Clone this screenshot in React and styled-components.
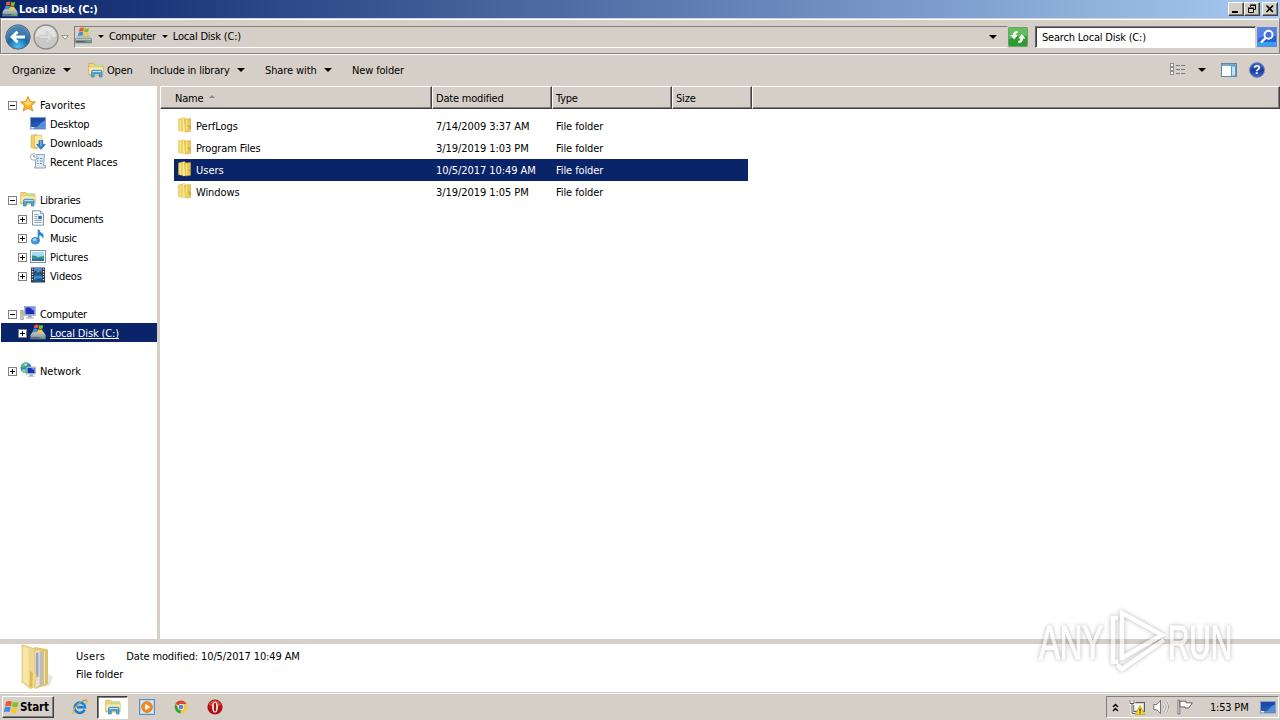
import React from "react";
import styled, { createGlobalStyle, css } from "styled-components";

const Global = createGlobalStyle`
  * { box-sizing: border-box; }
  html, body { margin: 0; padding: 0; overflow: hidden; }
  body {
    font-family: "DejaVu Sans Condensed", "DejaVu Sans", "Liberation Sans", sans-serif;
    font-stretch: condensed;
    font-size: 11px;
    letter-spacing: -0.2px;
    color: #000;
    background: #d4d0c8;
    white-space: nowrap;
    cursor: default;
  }
`;

const FACE = "#d5cfc7";
const NAVY = "#0a246a";

const Screen = styled.div`
  position: relative;
  width: 1280px;
  height: 720px;
  display: flex;
  flex-direction: column;
  background: ${FACE};
`;

const Icon = styled.svg`
  display: block;
  flex: none;
  width: ${(p) => p.$w || 16}px;
  height: ${(p) => p.$h || p.$w || 16}px;
`;

/* ---------- icons ---------- */
const Flag = () => (
  <g>
    <path d="M3.2 1.4Q5.2.2 7.3 1.2L6.6 4.6Q4.6 3.8 2.5 4.8z" fill="#f0582a" />
    <path d="M8 1.4Q10 2.3 12 1.4L11.2 4.8Q9.3 5.6 7.3 4.8z" fill="#7fc225" />
    <path d="M2.3 5.4Q4.4 4.4 6.4 5.3L5.7 8.6Q3.6 7.8 1.6 8.8z" fill="#3a8ee6" />
    <path d="M7.1 5.5Q9.1 6.4 11.1 5.5L10.4 8.8Q8.4 9.7 6.4 8.8z" fill="#fbc91f" />
  </g>
);

const DriveIcon = ({ size = 16 }) => (
  <Icon viewBox="0 0 16 16" $w={size}>
    <path d="M.3 11.300L3.500 6.500h9l3.300 4.800z" fill="#b9c0b8" />
    <path d="M.3 10.800h15.500V15.300H.3z" fill="#6f8088" />
    <path d="M1 11.300h14v1.200H1z" fill="#b7c5c4" />
    <path d="M11.500 13h2.800v1.200h-2.800z" fill="#45d04c" />
    <path d="M1.200 13.400h8v.8h-8z" fill="#44586a" />
    <g transform="translate(1.200 -.3)"><Flag /></g>
  </Icon>
);

const ComputerIcon = () => (
  <Icon viewBox="0 0 16 16">
    <path d="M.8 5.500h2.400v9H.8z" fill="#d9dcd2" stroke="#7e8474" strokeWidth=".7" />
    <path d="M1.500 7h1M1.500 9h1" stroke="#6ba637" />
    <rect x="4.400" y="1.300" width="11" height="9" fill="#cdd4e4" stroke="#8790a8" strokeWidth=".6" />
    <path d="M5.400 2.300h9v7h-9z" fill="#1c2fb8" />
    <path d="M9.500 2.300h4.900v4z" fill="#7d9af0" />
    <path d="M8.400 10.400h3l.8 2.400H7.400z" fill="#9aa2b4" />
    <path d="M6 12.400h8v1.200H6z" fill="#b6bccb" />
  </Icon>
);

const NetworkIcon = () => (
  <Icon viewBox="0 0 16 16">
    <circle cx="6" cy="5.800" r="5.500" fill="#2c8ad6" />
    <path d="M2 2.500Q5-.2 7.500 1L6.500 4 3.600 5.600 1 5z" fill="#67c34a" />
    <path d="M3 7l3 .8L5.400 11Q3 10.500 1.800 8.500z" fill="#8fdb6c" />
    <path d="M4 2.200L7 1.500 6 4z" fill="#d8f5ff" />
    <rect x="6.600" y="5" width="9" height="7" fill="#d3d9e6" stroke="#8892aa" strokeWidth=".6" />
    <rect x="7.500" y="5.900" width="7.200" height="5.200" fill="#1736b6" />
    <path d="M11 5.900h3.700v3z" fill="#6d93ee" />
    <path d="M10 12.200h2.500l.8 2.200H9z" fill="#a4acbc" />
    <path d="M8 14h6.500v1H8z" fill="#c2c9d6" />
  </Icon>
);

const StarIcon = () => (
  <Icon viewBox="0 0 16 16">
    <path d="M8 .6l2.200 5 5.300.4-4.100 3.500 1.400 5.500L8 12l-4.800 3 1.400-5.500L.5 6l5.300-.4z" fill="#fdb62c" stroke="#e58a14" strokeWidth=".9" />
    <path d="M8 2.800l1.400 3.500 3 .3L8 9.500 3.600 6.600l3-.3z" fill="#ffe27a" />
  </Icon>
);

const MonitorIcon = () => (
  <Icon viewBox="0 0 16 16">
    <rect x=".5" y="2.500" width="15" height="11.500" fill="#2457b4" stroke="#7ea0cf" />
    <path d="M1 3h14v4Q8 6 1 9z" fill="#1c4aa6" />
    <path d="M9 10Q12 6 15 5.500V12H7z" fill="#4f8fe0" />
    <path d="M1 12h14v1.500H1z" fill="#6f8fc0" />
    <path d="M1 12h3v1.500H1z" fill="#dff0ff" />
  </Icon>
);

const DownloadsIcon = () => (
  <Icon viewBox="0 0 16 16">
    <path d="M1 1.500L7 .5V15l-6-1.500z" fill="#f0cf68" stroke="#d4aa3c" strokeWidth=".6" />
    <path d="M4.500 1.500h7.500v12H4.500z" fill="#fbeaa4" stroke="#d9b552" strokeWidth=".6" />
    <path d="M9 6.500h3.800v4h2.400L11 15.400 6.700 10.500H9z" fill="#2d86d6" stroke="#1c62ad" strokeWidth=".7" />
    <path d="M9.700 7h1.200v5" stroke="#86c6f6" fill="none" />
  </Icon>
);

const RecentIcon = () => (
  <Icon viewBox="0 0 16 16">
    <path d="M5.500 1.500h9l-1 11h2V15H4.500l1-2z" fill="#e1e9f1" stroke="#8599ad" strokeWidth=".9" />
    <path d="M7 5.500h1.600M10 5.500h2.500M7 8h1.600M10 8h2.500M7 10.500h1.600M10 10.500h2" stroke="#5d8fc6" strokeWidth="1.200" />
    <circle cx="3.800" cy="3.900" r="3.300" fill="#fff" stroke="#9aa4ae" strokeWidth=".9" />
    <path d="M3.800 2v2h1.600" stroke="#54606c" fill="none" strokeWidth=".8" />
  </Icon>
);

const LibraryIcon = ({ size = 16 }) => (
  <Icon viewBox="0 0 16 16" $w={size}>
    <path d="M.8 1.500h5l1 1.500h8v10H.8z" fill="#f3d775" stroke="#cda645" strokeWidth=".7" />
    <path d="M7 2.200h7.500v2.500H7z" fill="#bfe0a0" />
    <path d="M.8 5h14.400v7H.8z" fill="#fbeeb0" stroke="#d7b757" strokeWidth=".6" />
    <path d="M3.500 15V9.600Q3.500 8.200 5 8.200h7.500Q14 8.200 14 9.600V15h-2.600v-3.600H6.200V15z" fill="#4fa6e4" stroke="#2d7cc0" strokeWidth=".7" />
    <path d="M4.500 9.500h8.500" stroke="#b8e2fb" />
  </Icon>
);

const DocumentIcon = () => (
  <Icon viewBox="0 0 16 16">
    <path d="M2.500.8h8l3 3v11.400h-11z" fill="#fcfdff" stroke="#71879f" strokeWidth=".9" />
    <path d="M10.500.8v3h3" fill="#d0dceb" stroke="#71879f" strokeWidth=".7" />
    <path d="M4.300 4.500h4M4.300 6.500h3M4.300 8.500h3M4.300 10.500h7.400M4.300 12.500h7.400" stroke="#8195aa" strokeWidth=".9" />
    <path d="M8.200 5.800h3.600v3.400H8.200z" fill="#2f6fb5" />
  </Icon>
);

const MusicIcon = () => (
  <Icon viewBox="0 0 16 16">
    <ellipse cx="5.400" cy="11.800" rx="4" ry="3.300" fill="#3f9fe0" stroke="#1d6db3" strokeWidth=".7" />
    <path d="M7.700 12V.5h1.600Q9.800 3.500 12.800 4.800 14.500 7 12.800 10 12.600 6.800 9.400 6.200V12z" fill="#2b88cf" />
    <ellipse cx="4.600" cy="10.800" rx="2" ry="1.200" fill="#a6dcfa" />
  </Icon>
);

const PicturesIcon = () => (
  <Icon viewBox="0 0 16 16">
    <rect x=".5" y="2.500" width="15" height="12" fill="#fff" stroke="#7890a8" />
    <path d="M2 4h12v6H2z" fill="#a6d9f5" />
    <path d="M2 7.500Q5 7 8 9l6-1v5H2z" fill="#3e8f86" />
    <path d="M2 11h12v2H2z" fill="#2d6ca0" />
  </Icon>
);

const VideosIcon = () => (
  <Icon viewBox="0 0 16 16">
    <path d="M1 .5h14v15H1z" fill="#2a2f38" />
    <path d="M4 1h8v6.600H4zM4 8.600h8V15H4z" fill="#3c8fd4" />
    <path d="M4 5q3-3 8 0v2.600H4zM4 13q4-3 8-1v3H4z" fill="#1e5590" />
    <path d="M8 3l2 1.500-3 1z" fill="#e87848" />
    <path d="M2.500 1.500v13M13.500 1.500v13" stroke="#e4e8ee" strokeWidth="1.400" strokeDasharray="1.300 1.300" />
  </Icon>
);

const FolderIcon = () => (
  <Icon viewBox="0 0 16 16">
    <path d="M1.500 2L7.500 .6v14.200l-6-1.200z" fill="#f0d264" stroke="#dcb950" strokeWidth=".5" />
    <path d="M6 1L9.500 1.700v12.600L6 15.300z" fill="#fbeb9c" />
    <path d="M7.500 2.200l6-.6v12.600l-5 .8z" fill="#ecc955" stroke="#cfa83a" strokeWidth=".6" />
    <path d="M3.200 2.800v10.700" stroke="#f9e48e" strokeWidth="1.300" />
    <path d="M9.500 2.500v11.500" stroke="#f8e38c" strokeWidth="1.200" />
    <path d="M11 9h2v3" stroke="#b8932c" fill="none" strokeWidth=".8" />
  </Icon>
);

const BigFolderIcon = () => (
  <Icon viewBox="0 0 36 48" $w={36} $h={48}>
    <path d="M26 28l8 5-3 8-6 2z" fill="#e8e6df" />
    <path d="M15 3l13 2v36l-12 4z" fill="#e3c66c" />
    <path d="M15.500 7l5-1v35l-5 3z" fill="#e6e4dc" />
    <path d="M17 9l2.500-.5v24l-2.500 1z" fill="#8fa7d8" />
    <path d="M21 8l3-.5v33l-3 1.500z" fill="#b9bec6" />
    <path d="M24 6l5-.5V40l-5 2z" fill="#dcc06a" />
    <path d="M25.500 7v33.500" stroke="#f4e4a8" strokeWidth="1.200" />
    <path d="M3 .8L16 5v24l1.500 2-2 12-4 1.500L3 38z" fill="#efd98e" stroke="#d9bf68" strokeWidth=".8" />
    <path d="M4 2.500l5.500 2v36L4 37z" fill="#f8e7a6" />
    <path d="M11 27l3 2-1 14.500-2.500-.5z" fill="#dcb85a" />
  </Icon>
);

const BackIcon = () => (
  <Icon viewBox="0 0 26 26" $w={26}>
    <defs>
      <radialGradient id="back" cx=".5" cy=".9" r=".85">
        <stop offset="0" stopColor="#4cc4f0" />
        <stop offset=".5" stopColor="#1b67a6" />
        <stop offset="1" stopColor="#6fa0c8" />
      </radialGradient>
    </defs>
    <circle cx="13" cy="13" r="12.200" fill="url(#back)" stroke="#4d6880" />
    <path d="M2.500 12.500a10.500 10.500 0 0 1 21 0Q13 15 2.500 12.500z" fill="#3f78a8" opacity=".6" />
    <path d="M20 13H8M12.500 7.800L7.200 13l5.300 5.200" fill="none" stroke="#fff" strokeWidth="3" />
  </Icon>
);

const ForwardIcon = () => (
  <Icon viewBox="0 0 26 26" $w={26}>
    <circle cx="13" cy="13" r="12" fill="#c9c8c6" stroke="#8c8c8c" strokeWidth="1.300" />
    <path d="M2.500 12.500a10.500 10.500 0 0 1 21 0Q13 16 2.500 12.500z" fill="#e2e1df" />
    <path d="M6.500 13h12M13.500 8l5 5-5 5" fill="none" stroke="#dcdbd9" strokeWidth="2.600" />
    <path d="M6 11.500h9l-3-3 1.500-1.500 6 6-6 6-1.500-1.500 3-3H6z" fill="none" stroke="#bdbcba" strokeWidth=".6" />
  </Icon>
);

const RefreshIcon = () => (
  <Icon viewBox="0 0 20 20" $w={20}>
    <rect x=".5" y=".5" width="19" height="19" rx="1" fill="#2f9b33" stroke="#6f9e70" />
    <path d="M1 1h18v8Q9 8 1 12z" fill="#62bf5e" />
    <path d="M9.500 4Q5.500 4 4.800 8H2.500l3.700 4.500L9.700 8H7.500Q8 6 10 5.700z" fill="#fff" />
    <path d="M10.500 16q4 0 4.700-4.500h2.300L13.800 7l-3.500 4.500h2.200Q12 14 10 14.300z" fill="#fff" />
  </Icon>
);

const SearchIcon = () => (
  <Icon viewBox="0 0 20 20" $w={20}>
    <rect x=".5" y=".5" width="19" height="19" fill="#2a5ed8" stroke="#5f86d8" />
    <path d="M1 1h18v8Q9 8 1 12z" fill="#5580e6" />
    <path d="M1 15h18v4H1z" fill="#36a0ee" />
    <circle cx="11.500" cy="7.800" r="4" fill="#3f6fe0" stroke="#fff" strokeWidth="1.900" />
    <path d="M8.500 11L4 15.500" stroke="#fff" strokeWidth="2.400" />
  </Icon>
);

const ViewIcon = () => (
  <Icon viewBox="0 0 16 14" $w={16} $h={14}>
    {[0.5, 4.5, 8.5].map((y) => (
      <g key={y} fill="none">
        <rect x=".5" y={y} width="3" height="3" fill="#fff" stroke="#8a8f94" />
        <path d={`M6 ${y + 2}h4M11 ${y + 2}h4`} stroke="#707c8c" />
      </g>
    ))}
  </Icon>
);

const PaneIcon = () => (
  <Icon viewBox="0 0 16 14" $w={16} $h={14}>
    <rect x=".5" y=".5" width="15" height="13" fill="#fff" stroke="#5c88aa" />
    <path d="M1 1h14v2H1z" fill="#7aa8c8" />
    <path d="M10.500 3h4v10h-4z" fill="#bfe4f6" stroke="#5c98bc" />
  </Icon>
);

const HelpGlyph = styled.span`
  width: 16px;
  height: 16px;
  border-radius: 50%;
  border: 1px solid #6d87bb;
  background: linear-gradient(#4468cc, #1d3a9c 55%, #3e6ada);
  color: #fff;
  font: bold 12px/14px "Liberation Sans", sans-serif;
  letter-spacing: 0;
  text-align: center;
`;

const StartFlag = () => (
  <Icon viewBox="1 -0.200 12 10.500" $w={17} $h={16}>
    <Flag />
  </Icon>
);

const IeIcon = () => (
  <Icon viewBox="0 0 16 16">
    <path d="M12.600 10.800A5.200 5.200 0 1 1 13 8.200H5" fill="none" stroke="#1c7ed0" strokeWidth="2.500" />
    <path d="M5 7.400Q8 5 12 7" fill="none" stroke="#7cc6f4" strokeWidth=".8" />
    <path d="M1.800 15Q-.8 13.500 4 7.600 10 .6 14.600.9q1.600.8-.6 4" fill="none" stroke="#eeb22b" strokeWidth="1.200" />
    <path d="M4 8Q9 1.500 14 1.200" fill="none" stroke="#3f9be0" strokeWidth=".9" />
  </Icon>
);

const PlayerIcon = () => (
  <Icon viewBox="0 0 16 16">
    <rect x=".5" y=".5" width="15" height="15" fill="#b4d8f4" stroke="#5591c8" />
    <rect x="2" y="2" width="12" height="12" fill="#dcebf7" />
    <circle cx="8" cy="8" r="5.500" fill="#f28a1c" stroke="#d86a0c" strokeWidth=".6" />
    <path d="M6.200 4.800L11.200 8l-5 3.200z" fill="#fff" />
  </Icon>
);

const ChromeIcon = () => (
  <Icon viewBox="0 0 16 16">
    <circle cx="8" cy="8" r="6.300" fill="#fbc934" />
    <path d="M8 8L2.500 4.800A6.300 6.300 0 0 1 13.600 5H8z" fill="#dd4536" />
    <path d="M2.500 4.800L5.500 10 8 14.300A6.300 6.300 0 0 1 2.500 4.800z" fill="#34a04e" />
    <path d="M5.200 9.500L8 11l-1 3.200-3-2z" fill="#34a04e" />
    <circle cx="8" cy="8" r="3" fill="#f4f4f4" />
    <circle cx="8" cy="8" r="2.300" fill="#4a86e0" />
  </Icon>
);

const OperaIcon = () => (
  <Icon viewBox="0 0 16 16">
    <circle cx="8" cy="8" r="7.600" fill="#b01214" />
    <path d="M1.500 6a7 7 0 0 1 13 0Q8 9 1.500 6z" fill="#d4403c" />
    <ellipse cx="8" cy="8" rx="2.900" ry="5.600" fill="#fff" />
    <ellipse cx="8" cy="8" rx="1.300" ry="4.600" fill="#a81214" />
  </Icon>
);

const NetTrayIcon = () => (
  <Icon viewBox="0 0 16 16">
    <rect x="4.500" y="3.500" width="11" height="9" fill="#d8d6d0" stroke="#5c5c5c" />
    <path d="M6 5h8v6H6z" fill="#f6f6f4" />
    <path d="M1 1v3.500h4V1M3 4.500v10h5" fill="none" stroke="#fff" strokeWidth="2.600" />
    <path d="M1 1v3.500h4V1M3 4.500v10h5" fill="none" stroke="#4a4a4a" strokeWidth=".9" />
    <path d="M11 6.500l4.800 9H6.200z" fill="#fbd91c" stroke="#c79a0a" strokeWidth=".7" />
    <path d="M11 9.500v3M11 13.300v1.300" stroke="#222" strokeWidth="1.200" />
  </Icon>
);

const SpeakerIcon = () => (
  <Icon viewBox="0 0 16 16">
    <path d="M.8 5.500h3L7.500 1.500v13L3.800 10.700h-3z" fill="#fff" stroke="#666" strokeWidth=".9" />
    <path d="M9.500 5.500q1.800 2.500 0 5M11.500 3.500q3.200 4.500 0 9M13.500 2q4 6 0 12" fill="none" stroke="#fff" strokeWidth="1.800" />
    <path d="M9.500 5.500q1.800 2.500 0 5M11.500 3.500q3.200 4.500 0 9M13.500 2q4 6 0 12" fill="none" stroke="#777" strokeWidth=".8" />
  </Icon>
);

const FlagTrayIcon = () => (
  <Icon viewBox="0 0 16 16">
    <path d="M1 1.200h1.800V15H1z" fill="#fff" stroke="#555" strokeWidth=".8" />
    <path d="M3 2.200h6v1.600h6.300l-2 3-1.500 2.200H8V8H3z" fill="#fff" stroke="#555" strokeWidth=".9" />
  </Icon>
);

const ChevronsUp = () => (
  <Icon viewBox="0 0 7 9" $w={7} $h={9}>
    <path d="M1 4L3.500 1.500 6 4M1 8L3.500 5.500 6 8" fill="none" stroke="#000" strokeWidth="1.500" />
  </Icon>
);

/* ---------- shared parts ---------- */
const Caret = styled.span`
  flex: none;
  width: 0;
  height: 0;
  border: ${(p) => p.$s || 4}px solid transparent;
  border-top-color: #000;
  border-bottom: 0;
`;

const Label = styled.span`
  letter-spacing: ${(p) => (p.$ls !== undefined ? p.$ls + "px" : "inherit")};
`;

/* ---------- title bar ---------- */
const TitleBar = styled.header`
  height: 18px;
  flex: none;
  display: flex;
  align-items: center;
  padding: 0 2px;
  background: linear-gradient(90deg, #0a246a, #a6caf0);
`;
const Title = styled.h1`
  margin: 0 auto 0 1px;
  font-size: 11px;
  letter-spacing: -0.1px;
  color: #fff;
`;
const WinButton = styled.button`
  width: 16px;
  height: 14px;
  margin-left: ${(p) => (p.$gap ? 2 : 0)}px;
  padding: 0;
  display: flex;
  align-items: center;
  justify-content: center;
  border: 1px solid;
  border-color: #fff #404040 #404040 #fff;
  background: ${FACE};
  box-shadow: inset -1px -1px #808080;
`;

/* ---------- navigation ---------- */
const NavBar = styled.nav`
  height: 36px;
  flex: none;
  display: flex;
  align-items: center;
  padding: 2px 2px 0 4px;
  border: 1px solid #808080;
  border-color: #d8d4de #808080 #808080 #808080;
  box-shadow: inset 0 1px #fff, inset 1px 0 #e8e4dc, 0 1px #fff;
`;
const HistoryCaret = styled.span`
  width: 8px;
  margin: 0 5px 0 2px;
`;
const AddressBar = styled.div`
  flex: 1;
  height: 22px;
  display: flex;
  align-items: center;
  border: 1px solid;
  border-color: #808080 transparent #fff #808080;
`;
const AddressIcon = styled.span`
  margin-bottom: 3px;
`;
const Crumb = styled.span`
  display: flex;
  align-items: center;
  gap: 5px;
  margin: 0 0 2px ${(p) => p.$ml}px;
`;
const Push = styled.span`
  margin-left: auto;
`;
const SearchBox = styled.div`
  width: 221px;
  height: 22px;
  margin: 0 1px 0 7px;
  padding: 0 6px;
  line-height: 21px;
  background: #fff;
  border: 1px solid;
  border-color: #808080 #d4d0c8 #fff #606060;
  box-shadow: inset 1px 1px #404040;
`;

/* ---------- command bar ---------- */
const CommandBar = styled.div`
  height: 32px;
  flex: none;
  display: flex;
  align-items: center;
  padding: 0 15px 0 12px;
`;
const Command = styled.div`
  display: flex;
  align-items: center;
  width: ${(p) => p.$w}px;
`;
const CommandText = styled.span`
  width: ${(p) => p.$w}px;
  letter-spacing: ${(p) => p.$ls ?? -0.2}px;
`;

/* ---------- body ---------- */
const Body = styled.div`
  height: 553px;
  flex: none;
  display: flex;
  background: #fff;
`;
const Tree = styled.aside`
  width: 160px;
  flex: none;
  padding-top: 9px;
  border-right: 3px solid ${FACE};
`;
const TreeRow = styled.div`
  height: 19px;
  margin-left: 1px;
  display: flex;
  align-items: center;
  padding-left: ${(p) => (p.$child ? 17 : 7)}px;
  ${(p) =>
    p.$selected &&
    css`
      background: ${NAVY};
      color: #fff;
      text-decoration: underline;
    `}
`;
const TreeIcon = styled.span`
  margin-bottom: 1px;
`;
const Gap = styled.div`
  height: 19px;
`;
const Expander = styled.span`
  width: 9px;
  height: 9px;
  margin: 1px 3px 0 0;
  flex: none;
  background: ${(p) =>
    p.$kind === "plus"
      ? "linear-gradient(#000,#000) center/1px 5px no-repeat, linear-gradient(#000,#000) center/5px 1px no-repeat, #fff"
      : "linear-gradient(#000,#000) center/5px 1px no-repeat, #fff"};
  border: 1px solid #808080;
  visibility: ${(p) => (p.$kind ? "visible" : "hidden")};
`;
const TreeLabel = styled.span`
  margin: 2px 0 0 4px;
  letter-spacing: ${(p) => p.$ls}px;
`;

const Files = styled.main`
  flex: 1;
`;
const Header = styled.div`
  height: 23px;
  display: flex;
`;
const HeadCell = styled.div`
  width: ${(p) => p.$w}px;
  flex: ${(p) => (p.$w ? "none" : 1)};
  display: flex;
  align-items: center;
  gap: 6px;
  padding: 1px 0 0 ${(p) => p.$pl || 3}px;
  background: ${FACE};
  border: 1px solid;
  border-color: #fff #404040 #404040 #fff;
  box-shadow: inset -1px -1px #808080;
`;
const SortMark = styled.span`
  margin-bottom: 3px;
  border: 3px solid transparent;
  border-top: 0;
  border-bottom-color: #888;
`;
const Rows = styled.div`
  padding: 6px 0 0 14px;
`;
const FileRow = styled.div`
  width: 574px;
  height: 22px;
  display: grid;
  grid-template-columns: 262px 120px 1fr;
  align-items: center;
  color: ${(p) => (p.$selected ? "#fff" : "#000")};
  background: ${(p) => (p.$selected ? NAVY : "transparent")};
`;
const NameCell = styled.div`
  display: flex;
  align-items: center;
  gap: 3px;
  padding-left: 3px;
`;
const FileIcon = styled.span`
  margin-bottom: 2px;
`;

/* ---------- details ---------- */
const Details = styled.section`
  height: 53px;
  flex: none;
  display: flex;
  border-top: 5px solid ${FACE};
  background: #fff;
  padding-left: 19px;
`;
const DetailText = styled.div`
  margin: 4px 0 0 21px;
  line-height: 18px;
`;
const DetailLine = styled.div`
  display: flex;
  gap: ${(p) => p.$gap || 0}px;
`;

/* ---------- taskbar ---------- */
const Taskbar = styled.footer`
  flex: 1;
  display: flex;
  align-items: center;
  padding: 1px 1px 0 2px;
  border-top: 1px solid ${FACE};
  box-shadow: inset 0 1px #fff;
`;
const StartButton = styled.button`
  width: 52px;
  height: 22px;
  padding: 0;
  margin-right: 10px;
  display: flex;
  align-items: center;
  font: bold 11.500px "DejaVu Sans Condensed", "DejaVu Sans", sans-serif;
  letter-spacing: -0.100px;
  color: #000;
  background: ${FACE};
  border: 1px solid;
  border-color: #fff #404040 #404040 #fff;
  box-shadow: inset -1px -1px #808080;
`;
const TaskItem = styled.div`
  width: 31px;
  height: 23px;
  margin-right: ${(p) => p.$mr ?? 3}px;
  display: flex;
  align-items: center;
  justify-content: center;
  border: 1px solid transparent;
  ${(p) =>
    p.$active &&
    css`
      background: #fff;
      border-color: #404040 #fff #fff #404040;
      box-shadow: inset 1px 1px #808080;
    `}
`;
const Tray = styled.div`
  margin-left: auto;
  width: 173px;
  height: 22px;
  display: flex;
  align-items: center;
  padding-left: 5px;
  border: 1px solid;
  border-color: #808080 #fff #fff #808080;
`;
const TrayIcons = styled.div`
  display: flex;
  gap: 8px;
  margin-left: 10px;
`;
const Clock = styled.span`
  width: 42px;
  margin: 0 8px 0 17px;
`;

const Watermark = styled.svg`
  position: absolute;
  left: 1030px;
  top: 600px;
  overflow: visible;
  filter: drop-shadow(0 0 2px rgba(60, 60, 60, 0.65));
  opacity: 0.58;
  pointer-events: none;
`;

const tree = [
  [
    { t: "Favorites", i: <StarIcon />, k: "minus", ls: 0.1 },
    { t: "Desktop", i: <MonitorIcon />, child: true },
    { t: "Downloads", i: <DownloadsIcon />, child: true },
    { t: "Recent Places", i: <RecentIcon />, child: true, ls: -0.1 },
  ],
  [
    { t: "Libraries", i: <LibraryIcon />, k: "minus", ls: -0.25 },
    { t: "Documents", i: <DocumentIcon />, k: "plus", child: true, ls: -0.35 },
    { t: "Music", i: <MusicIcon />, k: "plus", child: true, ls: -0.3 },
    { t: "Pictures", i: <PicturesIcon />, k: "plus", child: true, ls: -0.1 },
    { t: "Videos", i: <VideosIcon />, k: "plus", child: true },
  ],
  [
    { t: "Computer", i: <ComputerIcon />, k: "minus", ls: -0.3 },
    { t: "Local Disk (C:)", i: <DriveIcon />, k: "plus", child: true, sel: true, ls: -0.15 },
  ],
  [{ t: "Network", i: <NetworkIcon />, k: "plus", ls: -0.05 }],
];

const files = [
  ["PerfLogs", "7/14/2009 3:37 AM", 0],
  ["Program Files", "3/19/2019 1:03 PM", -0.15],
  ["Users", "10/5/2017 10:49 AM", 0],
  ["Windows", "3/19/2019 1:05 PM", -0.1],
];

export default function App() {
  return (
    <Screen>
      <Global />
      <TitleBar>
        <DriveIcon />
        <Title>Local Disk (C:)</Title>
        <WinButton>
          <Icon viewBox="0 0 10 10" $w={10}><path d="M1 8h6" stroke="#000" strokeWidth="2" /></Icon>
        </WinButton>
        <WinButton>
          <Icon viewBox="0 0 10 10" $w={10}>
            <path d="M3.500 3V1.500h5v4H7M3 1h6M1.500 4.500h5v4h-5zM1 4h6" fill="none" stroke="#000" />
          </Icon>
        </WinButton>
        <WinButton $gap>
          <Icon viewBox="0 0 10 10" $w={10}><path d="M1.500 1.500l6.500 6.500M8 1.500L1.500 8" stroke="#000" strokeWidth="1.600" /></Icon>
        </WinButton>
      </TitleBar>

      <NavBar>
        <BackIcon />
        <Icon viewBox="0 0 2 2" $w={2} />
        <ForwardIcon />
        <HistoryCaret>
          <Icon viewBox="0 0 8 5" $w={8} $h={5}><path d="M.8.700h6.400L4 4.200z" fill="#fff" stroke="#777" strokeWidth=".8" /></Icon>
        </HistoryCaret>
        <AddressBar>
          <AddressIcon><DriveIcon size={17} /></AddressIcon>
          <Crumb $ml={6}><Caret $s={3} /><Label $ls={-0.3}>Computer</Label></Crumb>
          <Crumb $ml={6}><Caret $s={3} /><Label $ls={-0.2}>Local Disk (C:)</Label></Crumb>
          <Push />
          <Caret />
          <Icon viewBox="0 0 10 2" $w={10} $h={2} />
        </AddressBar>
        <RefreshIcon />
        <SearchBox>Search Local Disk (C:)</SearchBox>
        <SearchIcon />
      </NavBar>

      <CommandBar>
        <Command $w={76}><CommandText $w={51} $ls={-0.1}>Organize</CommandText><Caret /></Command>
        <Command $w={62}><LibraryIcon /><Icon viewBox="0 0 3 3" $w={3} /><CommandText>Open</CommandText></Command>
        <Command $w={115}><CommandText $w={87}>Include in library</CommandText><Caret /></Command>
        <Command $w={87}><CommandText $w={59} $ls={-0.1}>Share with</CommandText><Caret /></Command>
        <Command><CommandText $ls={-0.15}>New folder</CommandText></Command>
        <Push />
        <Command $w={51}><ViewIcon /><Icon viewBox="0 0 12 2" $w={12} $h={2} /><Caret /></Command>
        <Command $w={28}><PaneIcon /></Command>
        <HelpGlyph>?</HelpGlyph>
      </CommandBar>

      <Body>
        <Tree>
          {tree.map((group, g) => (
            <React.Fragment key={g}>
              {g > 0 && <Gap />}
              {group.map((r) => (
                <TreeRow key={r.t} $child={r.child} $selected={r.sel}>
                  <Expander $kind={r.k} />
                  <TreeIcon>{r.i}</TreeIcon>
                  <TreeLabel $ls={r.ls ?? -0.2}>{r.t}</TreeLabel>
                </TreeRow>
              ))}
            </React.Fragment>
          ))}
        </Tree>
        <Files>
          <Header>
            <HeadCell $w={272} $pl={14}>Name<SortMark /></HeadCell>
            <HeadCell $w={120}>Date modified</HeadCell>
            <HeadCell $w={120}>Type</HeadCell>
            <HeadCell $w={80}>Size</HeadCell>
            <HeadCell />
          </Header>
          <Rows>
            {files.map(([name, date, ls]) => (
              <FileRow key={name} $selected={name === "Users"}>
                <NameCell><FileIcon><FolderIcon /></FileIcon><Label $ls={ls}>{name}</Label></NameCell>
                <Label $ls={-0.06}>{date}</Label>
                <Label $ls={-0.1}>File folder</Label>
              </FileRow>
            ))}
          </Rows>
        </Files>
      </Body>

      <Details>
        <BigFolderIcon />
        <DetailText>
          <DetailLine $gap={21}>
            <Label $ls={0.3}>Users</Label>
            <Label $ls={-0.12}>Date modified: 10/5/2017 10:49 AM</Label>
          </DetailLine>
          <DetailLine><Label $ls={-0.1}>File folder</Label></DetailLine>
        </DetailText>
      </Details>

      <Taskbar>
        <StartButton><StartFlag />Start</StartButton>
        <TaskItem $mr={2}><IeIcon /></TaskItem>
        <TaskItem $active><LibraryIcon /></TaskItem>
        <TaskItem><PlayerIcon /></TaskItem>
        <TaskItem><ChromeIcon /></TaskItem>
        <TaskItem><OperaIcon /></TaskItem>
        <Tray>
          <ChevronsUp />
          <TrayIcons>
            <NetTrayIcon />
            <SpeakerIcon />
            <FlagTrayIcon />
          </TrayIcons>
          <Clock>1:53 PM</Clock>
          <MonitorIcon />
        </Tray>
      </Taskbar>

      <Watermark width="220" height="84" viewBox="0 0 220 84">
        <g fill="#fff" stroke="#fff" strokeWidth="1.200" fontFamily="Liberation Sans, sans-serif" fontSize="48">
          <text x="9" y="59" textLength="64" lengthAdjust="spacingAndGlyphs">ANY</text>
          <text x="138" y="59" textLength="64" lengthAdjust="spacingAndGlyphs">RUN</text>
        </g>
        <path d="M88 18h-5v44h5M92 60V13l40 22-40 23M134 40L92 69l-5-4" fill="none" stroke="#fff" strokeWidth="4.500" />
      </Watermark>
    </Screen>
  );
}
